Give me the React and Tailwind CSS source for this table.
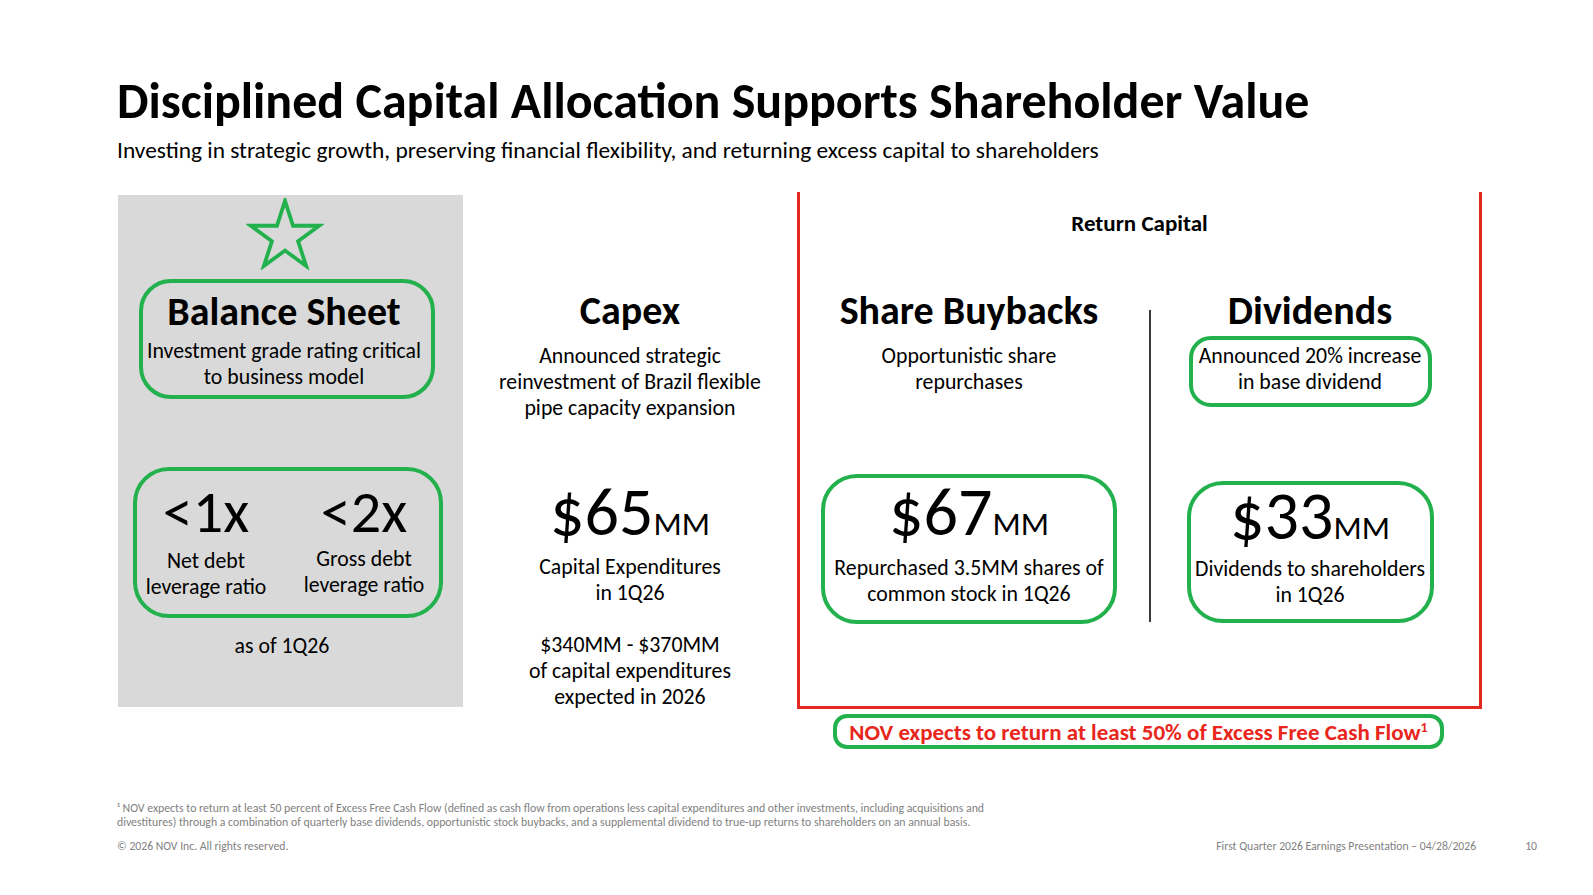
function Star() {
  return (
    <svg width="78" height="72" viewBox="0 0 80 76" className="block">
      <polygon
        points="40,3 48.5,29.3 76.1,29.3 53.8,45.5 62.3,71.7 40,55.5 17.7,71.7 26.2,45.5 3.9,29.3 31.5,29.3"
        fill="none"
        stroke="#23b14d"
        strokeWidth="4"
        strokeLinejoin="miter"
      />
    </svg>
  );
}

function Big({ n }) {
  return (
    <div className="text-[68px] leading-[60px] whitespace-nowrap">
      {n}
      <span className="text-[33px]">MM</span>
    </div>
  );
}

export default function App() {
  return (
    <div className="w-[1593px] h-[895px] bg-white overflow-hidden text-black font-['Carlito','Liberation_Sans',sans-serif]">
      {/* Header */}
      <div className="pl-[117px] pt-[73px]">
        <h1 className="text-[50px] leading-[56px] font-bold whitespace-nowrap">
          Disciplined Capital Allocation Supports Shareholder Value
        </h1>
        <p className="mt-[7px] text-[23.4px] leading-[28px] whitespace-nowrap">
          Investing in strategic growth, preserving financial flexibility, and returning excess capital to shareholders
        </p>
      </div>

      {/* Main row */}
      <div className="mt-[28px] flex items-start pl-[118px]">
        {/* Balance sheet panel */}
        <div className="mt-[3px] w-[345px] h-[512px] bg-[#d9d9d9] flex flex-col items-start">
          <div className="mt-[3px] ml-[128px]">
            <Star />
          </div>
          <div className="mt-[9px] ml-[21px] w-[296px] h-[120px] rounded-[32px] border-[4px] border-[#23b14d] pt-[7px] pr-[6px] text-center">
            <div className="text-[40px] leading-[44px] font-bold whitespace-nowrap">Balance Sheet</div>
            <div className="mt-[4px] text-[21.8px] leading-[26px] whitespace-nowrap">
              Investment grade rating critical
              <br />
              to business model
            </div>
          </div>
          <div className="mt-[68px] ml-[15px] w-[310px] h-[151px] rounded-[36px] border-[4px] border-[#23b14d] pt-[9px] flex gap-[20px] text-center">
            <div className="w-[138px]">
              <div className="text-[60px] leading-[64px] whitespace-nowrap">&lt;1x</div>
              <div className="mt-[4px] text-[21.8px] leading-[26px] whitespace-nowrap">
                Net debt
                <br />
                leverage ratio
              </div>
            </div>
            <div className="w-[138px]">
              <div className="text-[60px] leading-[64px] whitespace-nowrap">&lt;2x</div>
              <div className="mt-[2px] text-[21.8px] leading-[26px] whitespace-nowrap">
                Gross debt
                <br />
                leverage ratio
              </div>
            </div>
          </div>
          <div className="mt-[15px] w-full pr-[17px] text-center text-[21.8px] leading-[26px]">as of 1Q26</div>
        </div>

        {/* Capex column */}
        <div className="w-[334px] pt-[97px] text-center">
          <div className="text-[40px] leading-[44px] font-bold">Capex</div>
          <div className="mt-[10px] text-[21.8px] leading-[26px] whitespace-nowrap">
            Announced strategic
            <br />
            reinvestment of Brazil flexible
            <br />
            pipe capacity expansion
          </div>
          <div className="mt-[61px]">
            <Big n="$65" />
          </div>
          <div className="text-[21.8px] leading-[26px]">
            Capital Expenditures
            <br />
            in 1Q26
          </div>
          <div className="mt-[26px] text-[21.8px] leading-[26px]">
            $340MM - $370MM
            <br />
            of capital expenditures
            <br />
            expected in 2026
          </div>
        </div>

        {/* Return capital */}
        <div className="flex flex-col items-start">
          <div className="w-[685px] h-[517px] border-x-[3px] border-b-[3px] border-[#e3281f] pt-[17px]">
            <div className="text-center text-[23px] leading-[28px] font-bold">Return Capital</div>
            <div className="mt-[52px] flex items-start">
              {/* Share buybacks */}
              <div className="w-[338px] flex flex-col items-center">
                <div className="text-[40px] leading-[44px] font-bold whitespace-nowrap">Share Buybacks</div>
                <div className="mt-[10px] text-center text-[21.8px] leading-[26px]">
                  Opportunistic share
                  <br />
                  repurchases
                </div>
                <div className="mt-[79px] w-[296px] h-[150px] rounded-[36px] border-[4px] border-[#23b14d] pt-[4px] flex flex-col items-center text-center">
                  <Big n="$67" />
                  <div className="mt-[1px] text-[21.8px] leading-[26px] whitespace-nowrap">
                    Repurchased 3.5MM shares of
                    <br />
                    common stock in 1Q26
                  </div>
                </div>
              </div>
              {/* Divider */}
              <div className="ml-[11px] mt-[21px] w-[2px] h-[312px] bg-[#3a3a3a]" />
              {/* Dividends */}
              <div className="w-[328px] pr-[10px] flex flex-col items-center">
                <div className="text-[40px] leading-[44px] font-bold whitespace-nowrap">Dividends</div>
                <div className="mt-[3px] w-[243px] h-[71px] rounded-[22px] border-[4px] border-[#23b14d] pt-[3px] text-center text-[21.8px] leading-[26px] whitespace-nowrap">
                  Announced 20% increase
                  <br />
                  in base dividend
                </div>
                <div className="mt-[74px] w-[247px] h-[142px] rounded-[36px] border-[4px] border-[#23b14d] pt-[1px] flex flex-col items-center text-center">
                  <Big n="$33" />
                  <div className="-mt-[2px] text-[21.8px] leading-[26px] whitespace-nowrap">
                    Dividends to shareholders
                    <br />
                    in 1Q26
                  </div>
                </div>
              </div>
            </div>
          </div>
          <div className="mt-[5px] ml-[36px] w-[611px] h-[35px] rounded-[14px] border-[4px] border-[#23b14d] flex items-center justify-center">
            <span className="text-[23px] leading-[24px] font-bold text-[#e8261c] whitespace-nowrap">
              NOV expects to return at least 50% of Excess Free Cash Flow
              <sup className="text-[14px] -top-[8px]">1</sup>
            </span>
          </div>
        </div>
      </div>

      {/* Footnote */}
      <div className="mt-[52px] pl-[117px] text-[11.8px] leading-[14px] text-[#7f7f7f]">
        <p>
          ¹ NOV expects to return at least 50 percent of Excess Free Cash Flow (defined as cash flow from operations less capital expenditures and other investments, including acquisitions and
          <br />
          divestitures) through a combination of quarterly base dividends, opportunistic stock buybacks, and a supplemental dividend to true-up returns to shareholders on an annual basis.
        </p>
      </div>

      {/* Footer */}
      <div className="mt-[10px] flex items-baseline pl-[117px] pr-[56px] text-[11.7px] leading-[14px] text-[#7f7f7f]">
        <span>© 2026 NOV Inc. All rights reserved.</span>
        <span className="ml-auto">First Quarter 2026 Earnings Presentation – 04/28/2026</span>
        <span className="ml-[49px]">10</span>
      </div>
    </div>
  );
}
